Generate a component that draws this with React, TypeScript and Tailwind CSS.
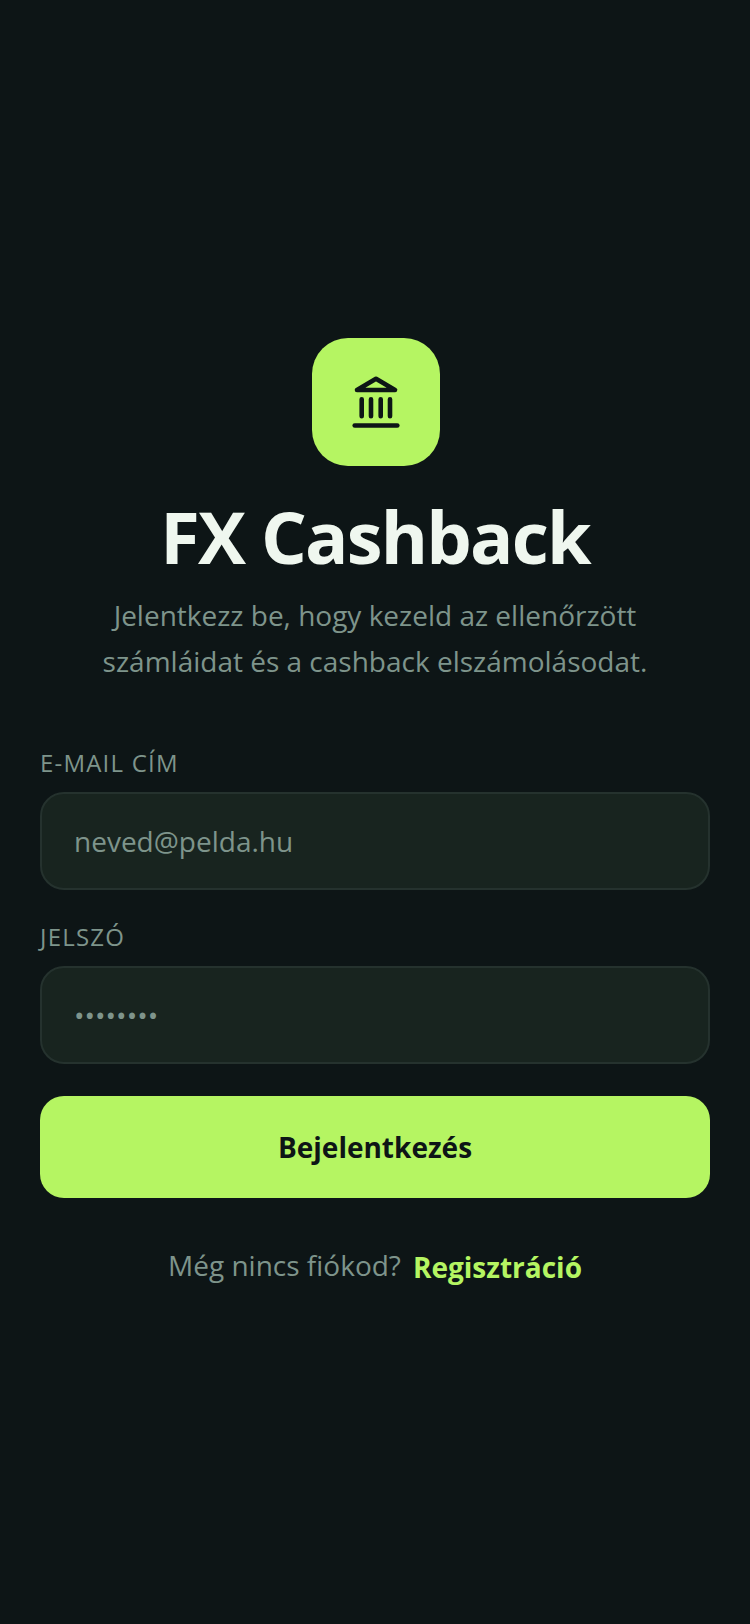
const bankIcon = (
  <svg width="50" height="50" viewBox="0 0 50 50" fill="none" stroke="#0d1516" strokeWidth="4.600" strokeLinecap="round" strokeLinejoin="round" className="overflow-visible">
    <path d="M3.700 48.500h42.600" />
    <path d="M6 13 25 1.800 44 13z" />
    <path d="M10.700 22.300v17M20 22.300v17M29.700 22.300v17M39 22.300v17" />
  </svg>
);

function Field({ label, value }: { label: string; value: string }) {
  return (
    <div className="flex flex-col gap-[13px]">
      <span className="text-[24px] leading-[32px] tracking-[1.2px] text-[#7e948b]">{label}</span>
      <div className="flex h-[98px] items-center rounded-[24px] border-2 border-[#25322e] bg-[#18241f] px-[32px]">
        <span className="text-[28px] text-[#7e948b]">{value}</span>
      </div>
    </div>
  );
}

export default function App() {
  return (
    <div className="flex min-h-[1624px] flex-col bg-[#0d1516] px-[40px] pt-[338px] font-['Open_Sans',sans-serif]">
      <div className="flex flex-col items-center">
        <div className="ml-[2px] flex h-[128px] w-[128px] items-center justify-center rounded-[36px] bg-[#b5f562]">{bankIcon}</div>
        <h1 className="mt-[26px] text-[72px] font-bold leading-[88px] tracking-[-1.8px] text-[#eff7ef]">FX Cashback</h1>
        <p className="mt-[12px] text-center text-[28px] leading-[46px] text-[#7e948b]">
          Jelentkezz be, hogy kezeld az ellenőrzött
          <br />
          számláidat és a cashback elszámolásodat.
        </p>
      </div>
      <div className="mt-[63px] flex flex-col gap-[31px]">
        <Field label="E-MAIL CÍM" value="neved@pelda.hu" />
        <Field label="JELSZÓ" value="••••••••" />
      </div>
      <div className="mt-[32px] flex h-[102px] items-center justify-center rounded-[24px] bg-[#b5f562] text-[28px] font-bold text-[#0d1516]">Bejelentkezés</div>
      <div className="mt-[46px] flex items-center justify-center gap-[12px] text-[28px]">
        <span className="mb-[4px] text-[#7e948b]">Még nincs fiókod?</span>
        <span className="font-bold text-[#b5f562]">Regisztráció</span>
      </div>
    </div>
  );
}
